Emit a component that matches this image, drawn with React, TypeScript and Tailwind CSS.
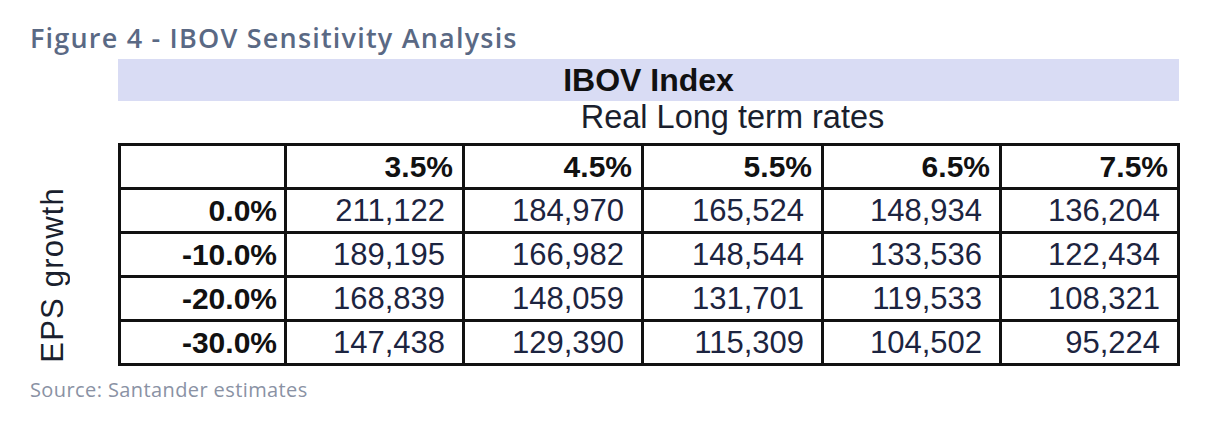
const cols = ['3.5%', '4.5%', '5.5%', '6.5%', '7.5%'];

const rows: { label: string; values: string[] }[] = [
  { label: '0.0%', values: ['211,122', '184,970', '165,524', '148,934', '136,204'] },
  { label: '-10.0%', values: ['189,195', '166,982', '148,544', '133,536', '122,434'] },
  { label: '-20.0%', values: ['168,839', '148,059', '131,701', '119,533', '108,321'] },
  { label: '-30.0%', values: ['147,438', '129,390', '115,309', '104,502', '95,224'] },
];

export default function App() {
  return (
    <div className="w-[1212px] h-[422px] bg-white overflow-hidden">
      <div className="pt-[24px] pl-[30px] text-[27px] leading-none font-semibold tracking-[1.2px] text-[#5a6984] font-['Open_Sans',sans-serif]">
        Figure 4 - IBOV Sensitivity Analysis
      </div>

      <div className="font-['Liberation_Sans',Arial,sans-serif]">
        <div className="ml-[118px] mt-[8px] w-[1061px] h-[42px] bg-[#d9dcf4] flex items-center justify-center">
          <span className="text-[32px] leading-none font-bold text-[#111]">IBOV Index</span>
        </div>

        <div className="ml-[285px] w-[895px] h-[42px] flex justify-center">
          <span className="text-[32.5px] leading-none text-[#1a1f2e]">Real Long term rates</span>
        </div>

        <div className="flex">
          <div className="w-[118px] flex items-end pl-[37px] pb-[3px]">
            <span className="[writing-mode:vertical-rl] rotate-180 text-[31px] tracking-[1.2px] leading-none text-[#1a1f2e]">
              EPS growth
            </span>
          </div>

          <div className="grid grid-cols-[163px_175px_176px_177px_175px_175px] auto-rows-[41px] gap-[3px] p-[3px] bg-[#111]">
            <div className="bg-white" />
            {cols.map((c) => (
              <div key={c} className="bg-white flex items-center justify-end pr-[9px] text-[30px] leading-none font-bold text-[#111]">
                {c}
              </div>
            ))}
            {rows.map((r) => (
              <div key={r.label} className="contents">
                <div className="bg-white flex items-center justify-end pr-[7px] text-[30px] leading-none font-bold text-[#111]">
                  {r.label}
                </div>
                {r.values.map((v, i) => (
                  <div key={i} className="bg-white flex items-center justify-end pr-[17px] text-[31px] leading-none text-[#1c2440]">
                    {v}
                  </div>
                ))}
              </div>
            ))}
          </div>
        </div>
      </div>

      <div className="pl-[30px] mt-[14px] text-[20px] leading-none tracking-[0.4px] text-[#8a92a4] font-['Open_Sans',sans-serif]">
        Source: Santander estimates
      </div>
    </div>
  );
}
